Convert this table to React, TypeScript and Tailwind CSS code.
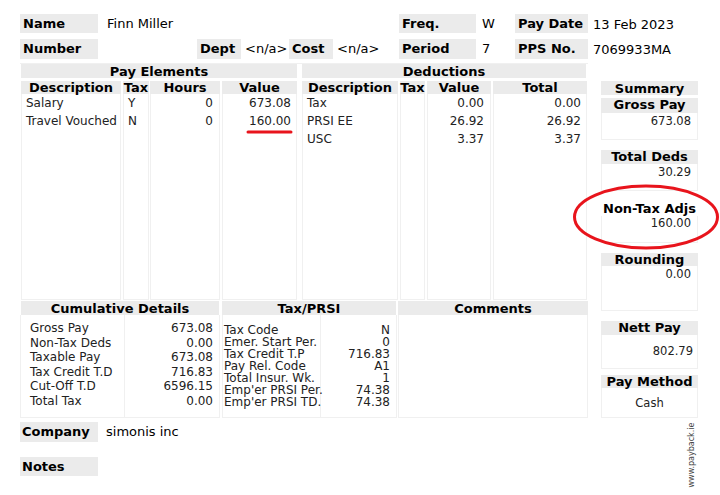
import React from 'react';

const lbl = 'bg-[#ebebeb] font-bold text-[13px] text-black';
const colBody = 'border-x border-b border-[#f0f0f0]';

const payRows = [
  { desc: 'Salary', tax: 'Y', hours: '0', value: '673.08' },
  { desc: 'Travel Vouched', tax: 'N', hours: '0', value: '160.00' },
];

const dedRows = [
  { desc: 'Tax', value: '0.00', total: '0.00' },
  { desc: 'PRSI EE', value: '26.92', total: '26.92' },
  { desc: 'USC', value: '3.37', total: '3.37' },
];

const cumulative = [
  ['Gross Pay', '673.08'],
  ['Non-Tax Deds', '0.00'],
  ['Taxable Pay', '673.08'],
  ['Tax Credit T.D', '716.83'],
  ['Cut-Off T.D', '6596.15'],
  ['Total Tax', '0.00'],
];

const taxPrsi = [
  ['Tax Code', 'N'],
  ['Emer. Start Per.', '0'],
  ['Tax Credit T.P', '716.83'],
  ['Pay Rel. Code', 'A1'],
  ['Total Insur. Wk.', '1'],
  ["Emp'er PRSI Per.", '74.38'],
  ["Emp'er PRSI TD.", '74.38'],
];

const Col: React.FC<{ title: string; w: string; ml?: string; children?: React.ReactNode }> = ({ title, w, ml = '', children }) => (
  <div className={`flex flex-col ${w} ${ml}`}>
    <div className={`${lbl} h-[13px] leading-[14px] text-center whitespace-nowrap`}>{title}</div>
    <div className={`${colBody} h-[206px] text-[12px] leading-[18px] text-[#222]`}>{children}</div>
  </div>
);

const SumBox: React.FC<{ title: string; hh: string; bh: string; mt: string; plain?: boolean; children?: React.ReactNode }> = ({ title, hh, bh, mt, plain, children }) => (
  <div className={`flex flex-col ${mt}`}>
    <div className={`${plain ? 'bg-white font-bold text-[13px] text-black' : lbl} ${hh} leading-[14px] text-center whitespace-nowrap`}>{title}</div>
    <div className={`${colBody} ${bh} text-[11.5px] text-[#222]`}>{children}</div>
  </div>
);

export default function App() {
  return (
    <div className="relative w-[720px] h-[495px] overflow-hidden bg-white pl-[20px] pt-[14px] font-['DejaVu_Sans',Verdana,sans-serif] text-black">
      {/* header fields */}
      <div className="flex h-[19px] text-[13px] leading-[19px]">
        <div className={`${lbl} w-[78px] pl-[3px]`}>Name</div>
        <div className="w-[301px] pl-[9px]">Finn Miller</div>
        <div className={`${lbl} w-[77px] pl-[3px]`}>Freq.</div>
        <div className="w-[39px] pl-[6px]">W</div>
        <div className={`${lbl} w-[73px] pl-[3px]`}>Pay Date</div>
        <div className="pl-[5px] leading-[22px]">13 Feb 2023</div>
      </div>
      <div className="flex h-[20px] mt-[6px] text-[13px] leading-[20px]">
        <div className={`${lbl} w-[78px] pl-[3px]`}>Number</div>
        <div className="w-[99px]" />
        <div className={`${lbl} w-[44px] pl-[3px]`}>Dept</div>
        <div className="w-[48px] pl-[4px]">&lt;n/a&gt;</div>
        <div className={`${lbl} w-[44px] pl-[3px]`}>Cost</div>
        <div className="w-[66px] pl-[4px]">&lt;n/a&gt;</div>
        <div className={`${lbl} w-[77px] pl-[3px]`}>Period</div>
        <div className="w-[39px] pl-[6px]">7</div>
        <div className={`${lbl} w-[73px] pl-[3px]`}>PPS No.</div>
        <div className="pl-[5px] leading-[22px]">7069933MA</div>
      </div>

      <div className="flex mt-[4px]">
        {/* left area */}
        <div className="flex flex-col w-[568px]">
          <div className="flex h-[237px] border-t border-[#f0f0f0]">
            {/* pay elements */}
            <div className="flex flex-col w-[278px]">
              <div className={`${lbl} h-[14px] mx-[1px] leading-[15px] text-center`}>Pay Elements</div>
              <div className="flex mt-[3px]">
                <Col title="Description" w="w-[100px]" ml="ml-[1px]">
                  {payRows.map((r) => (
                    <div key={r.desc} className="pl-[4px] whitespace-nowrap">{r.desc}</div>
                  ))}
                </Col>
                <Col title="Tax" w="w-[26px]" ml="ml-[2px]">
                  {payRows.map((r) => (
                    <div key={r.desc} className="pl-[4px]">{r.tax}</div>
                  ))}
                </Col>
                <Col title="Hours" w="w-[70px]" ml="ml-[1px]">
                  {payRows.map((r) => (
                    <div key={r.desc} className="pr-[6px] text-right">{r.hours}</div>
                  ))}
                </Col>
                <Col title="Value" w="w-[75px]" ml="ml-[2px]">
                  {payRows.map((r) => (
                    <div key={r.desc} className="pr-[5px] text-right">{r.value}</div>
                  ))}
                </Col>
              </div>
            </div>
            {/* deductions */}
            <div className="flex flex-col w-[288px] ml-[2px]">
              <div className={`${lbl} h-[14px] mx-[2px] leading-[15px] text-center`}>Deductions</div>
              <div className="flex mt-[3px]">
                <Col title="Description" w="w-[96px]" ml="ml-[2px]">
                  {dedRows.map((r) => (
                    <div key={r.desc} className="pl-[4px]">{r.desc}</div>
                  ))}
                </Col>
                <Col title="Tax" w="w-[25px]" ml="ml-[2px]" />
                <Col title="Value" w="w-[64px]" ml="ml-[2px]">
                  {dedRows.map((r) => (
                    <div key={r.desc} className="pr-[6px] text-right">{r.value}</div>
                  ))}
                </Col>
                <Col title="Total" w="w-[94px]" ml="ml-[2px]">
                  {dedRows.map((r) => (
                    <div key={r.desc} className="pr-[5px] text-right">{r.total}</div>
                  ))}
                </Col>
              </div>
            </div>
          </div>

          {/* bottom tables */}
          <div className="flex h-[119px] pt-[1px]">
            <div className="flex flex-col w-[200px]">
              <div className={`${lbl} h-[14px] mx-[1px] leading-[15px] text-center`}>Cumulative Details</div>
              <div className={`flex h-[103px] ${colBody} text-[12px] text-[#222]`}>
                <div className="w-[104px] border-r border-[#f0f0f0] pl-[9px] pt-[6px] leading-[14.6px]">
                  {cumulative.map(([k]) => (
                    <div key={k} className="whitespace-nowrap">{k}</div>
                  ))}
                </div>
                <div className="flex-1 pr-[6px] pt-[6px] leading-[14.6px] text-right">
                  {cumulative.map(([k, v]) => (
                    <div key={k}>{v}</div>
                  ))}
                </div>
              </div>
            </div>
            <div className="flex flex-col w-[175px] ml-[2px]">
              <div className={`${lbl} h-[14px] mr-[1px] leading-[15px] text-center`}>Tax/PRSI</div>
              <div className={`flex h-[103px] ${colBody} text-[12px] text-[#222]`}>
                <div className="w-[98px] border-r border-[#f0f0f0] pl-[1px] pt-[9px] leading-[12px]">
                  {taxPrsi.map(([k]) => (
                    <div key={k} className="whitespace-nowrap">{k}</div>
                  ))}
                </div>
                <div className="flex-1 pr-[6px] pt-[9px] leading-[12px] text-right">
                  {taxPrsi.map(([k, v]) => (
                    <div key={k}>{v}</div>
                  ))}
                </div>
              </div>
            </div>
            <div className="flex flex-col w-[190px] ml-[1px]">
              <div className={`${lbl} h-[14px] leading-[15px] text-center`}>Comments</div>
              <div className={`h-[103px] ${colBody}`} />
            </div>
          </div>
        </div>

        {/* summary column */}
        <div className="flex flex-col w-[97px] ml-[13px] pt-[18px]">
          <div className={`${lbl} h-[14px] leading-[15px] text-center`}>Summary</div>
          <SumBox title="Gross Pay" hh="h-[15px]" bh="h-[27px]" mt="mt-[3px]">
            <div className="pr-[6px] pt-[1px] text-right leading-[14px]">673.08</div>
          </SumBox>
          <SumBox title="Total Deds" hh="h-[14px]" bh="h-[27px]" mt="mt-[10px]">
            <div className="pr-[6px] pt-[1px] text-right leading-[14px]">30.29</div>
          </SumBox>
          <SumBox title="Non-Tax Adjs" hh="h-[14px]" bh="h-[27px]" mt="mt-[11px]" plain>
            <div className="pr-[6px] text-right leading-[14px]">160.00</div>
          </SumBox>
          <SumBox title="Rounding" hh="h-[13px]" bh="h-[45px]" mt="mt-[10px]">
            <div className="pr-[6px] pt-[1px] text-right leading-[14px]">0.00</div>
          </SumBox>
          <SumBox title="Nett Pay" hh="h-[14px]" bh="h-[34px]" mt="mt-[10px]">
            <div className="pr-[4px] pt-[9px] text-right leading-[14px]">802.79</div>
          </SumBox>
          <SumBox title="Pay Method" hh="h-[13px]" bh="h-[30px]" mt="mt-[6px]">
            <div className="pt-[8px] text-center leading-[14px]">Cash</div>
          </SumBox>
        </div>
      </div>

      {/* company / notes */}
      <div className="flex h-[20px] mt-[3px] text-[13px] leading-[20px]">
        <div className={`${lbl} w-[78px] pl-[2px]`}>Company</div>
        <div className="pl-[8px]">simonis inc</div>
      </div>
      <div className="flex h-[19px] mt-[15px] text-[13px] leading-[19px]">
        <div className={`${lbl} w-[78px] pl-[2px]`}>Notes</div>
      </div>

      {/* watermark */}
      <div className="absolute left-[692px] top-[455px] -translate-x-1/2 -translate-y-1/2 -rotate-90 whitespace-nowrap text-[8px] leading-[8px] text-[#444]">
        www.payback.ie
      </div>

      {/* red annotations */}
      <svg className="pointer-events-none absolute left-0 top-0" width="720" height="495" viewBox="0 0 720 495">
        <line x1="248" y1="132" x2="291" y2="132" stroke="#e8141c" strokeWidth="3" strokeLinecap="round" />
        <ellipse cx="646" cy="217" rx="71.5" ry="31" fill="none" stroke="#e8141c" strokeWidth="3" />
      </svg>
    </div>
  );
}
